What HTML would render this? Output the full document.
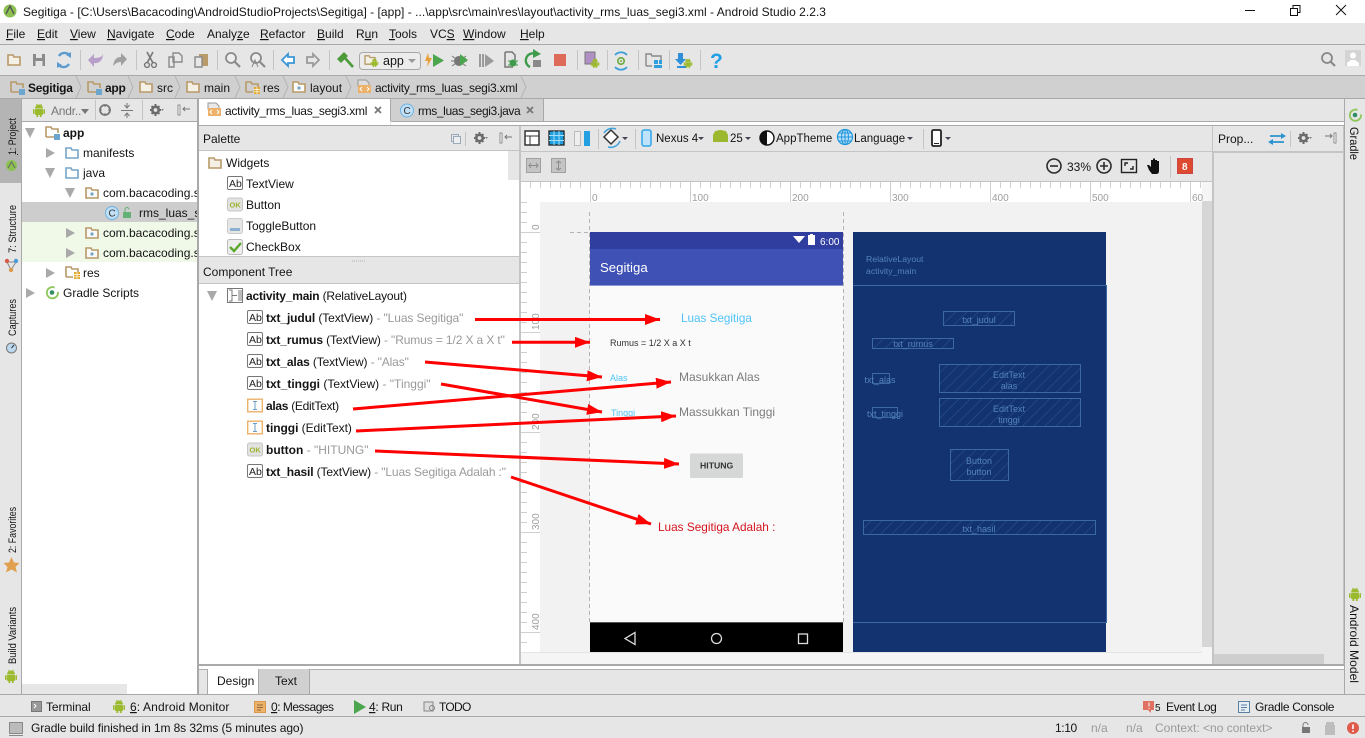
<!DOCTYPE html>
<html><head><meta charset="utf-8"><title>Android Studio</title>
<style>
html,body{margin:0;padding:0;width:1365px;height:738px;overflow:hidden;background:#e6e6e6}
svg{display:block;position:absolute;left:0;top:0}
text{font-family:"Liberation Sans",sans-serif;font-size:12px;fill:#141414;white-space:pre}
.b{font-weight:bold}
.g{fill:#9a9a9a}
.u{text-decoration:underline}
.vl{font-size:11px}
.r{font-size:10px;fill:#9d9d9d}
.bp{font-size:9px;fill:#5483bb}
.bl{fill:none;stroke:#3d69a3;stroke-width:1}
.s{stroke:#c4c4c4;stroke-width:1}
</style></head><body>
<svg width="1365" height="738" viewBox="0 0 1365 738" xmlns="http://www.w3.org/2000/svg">
<defs>
<pattern id="hx" width="10" height="682" patternUnits="userSpaceOnUse" x="520" y="182"><path d="M.5 0V6" stroke="#cfcfcf"/></pattern>
<pattern id="hy" width="20" height="10" patternUnits="userSpaceOnUse" x="520" y="202"><path d="M0 .5H7" stroke="#cfcfcf"/></pattern>
<pattern id="ha" width="8" height="8" patternUnits="userSpaceOnUse" patternTransform="rotate(45)"><path d="M0 0V8" stroke="#2e568f" stroke-width="1"/></pattern>
<marker id="ar" markerUnits="userSpaceOnUse" markerWidth="16" markerHeight="12" refX="15" refY="5.5" orient="auto"><path d="M0 0L15 5.5L0 11z" fill="#f00"/></marker>
<symbol id="fo" viewBox="0 0 14 12" overflow="visible"><path d="M1 11V1H6L7 3H13V11Z" fill="#f4f0e6" stroke="#b89968" stroke-width="1.6"/></symbol>
<symbol id="fb" viewBox="0 0 14 12" overflow="visible"><path d="M1 11V1H6L7 3H13V11Z" fill="#fff" stroke="#74a6c8" stroke-width="1.6"/></symbol>
<symbol id="fp" viewBox="0 0 14 12" overflow="visible"><path d="M1 11V1H6L7 3H13V11Z" fill="#fafafa" stroke="#b89968" stroke-width="1.6"/><circle cx="7" cy="7" r="1.6" fill="#74a6c8"/></symbol>
<symbol id="fm" viewBox="0 0 16 14" overflow="visible"><path d="M1 11V1H6L7 3H13V7M9 11H1" fill="none" stroke="#b89968" stroke-width="1.6"/><rect x="9" y="8" width="6" height="6" fill="#6ca6cf"/></symbol>
<symbol id="fr" viewBox="0 0 16 14" overflow="visible"><path d="M1 11V1H6L7 3H13V6M8 11H1" fill="none" stroke="#b89968" stroke-width="1.6"/><rect x="9" y="6" width="6" height="7" fill="#e0a92e"/><path d="M9 8.5H15M9 10.8H15M12 6V13" stroke="#fff" stroke-width=".7"/></symbol>
<symbol id="ab" viewBox="0 0 16 14" overflow="visible"><rect x=".5" y=".5" width="15" height="13" rx="1.5" fill="#fff" stroke="#777"/><text x="2" y="11" style="font-size:10.5px;fill:#222">Ab</text></symbol>
<symbol id="ok" viewBox="0 0 16 14" overflow="visible"><rect x=".5" y=".5" width="15" height="13" rx="2" fill="#e2e2e0" stroke="#c6c6c6"/><text x="2.5" y="10" style="font-size:7.5px;font-weight:bold;fill:#9cb42e">OK</text></symbol>
<symbol id="et" viewBox="0 0 16 14" overflow="visible"><rect x=".7" y=".7" width="14.6" height="12.6" fill="#fff" stroke="#eeb169" stroke-width="1.4"/><path d="M6 3H10M6 11H10M8 3V11" stroke="#6a9cc4" fill="none"/></symbol>
<symbol id="an" viewBox="0 0 14 14" overflow="visible"><path d="M3 5.5A4 4 0 0 1 11 5.5Z" fill="#9cba2e"/><rect x="3" y="6" width="8" height="6" rx="1" fill="#9cba2e"/><rect x="1" y="6" width="1.6" height="5" rx=".8" fill="#9cba2e"/><rect x="11.4" y="6" width="1.6" height="5" rx=".8" fill="#9cba2e"/><rect x="4.4" y="11" width="1.8" height="3" fill="#9cba2e"/><rect x="7.8" y="11" width="1.8" height="3" fill="#9cba2e"/><path d="M4.5 1L5.5 2.5M9.5 1L8.5 2.5" stroke="#9cba2e"/></symbol>
<symbol id="gr" viewBox="0 0 14 12" overflow="visible"><path d="M9.500 1A5.600 5.600 0 1 0 13 5.500" fill="none" stroke="#8dc65a" stroke-width="1.800"/><circle cx="7" cy="6" r="2.300" fill="#2f8f63"/></symbol>
<symbol id="gear" viewBox="0 0 14 12" overflow="visible"><circle cx="5.500" cy="6" r="3.200" fill="none" stroke="#6a6a6a" stroke-width="2.600"/><path d="M5.500 0V2M5.500 10V12M0 6H2M9 6H11M1.600 2.100L3 3.500M8 8.500L9.400 9.900M9.400 2.100L8 3.500M3 8.500L1.600 9.900" stroke="#6a6a6a" stroke-width="2"/><path d="M11 5H14L12.500 7z" fill="#888"/></symbol>
<symbol id="hl" viewBox="0 0 12 12" overflow="visible"><rect x="0" y="1" width="2" height="10" fill="#fff" stroke="#777" stroke-width=".8"/><path d="M5 5H12M7 3L5 5L7 7" stroke="#777" fill="none"/></symbol>
</defs>

<!-- base areas -->
<rect width="1365" height="23" fill="#fff"/>
<rect y="23" width="1365" height="21" fill="#e6e6e6"/>
<rect y="44" width="1365" height="1" fill="#a9a9a9"/>
<rect y="75" width="1365" height="1" fill="#a9a9a9"/>
<rect y="76" width="1365" height="22" fill="#d0d0d0"/>
<rect y="98" width="1365" height="1" fill="#a9a9a9"/>

<!-- left stripe -->
<rect x="0" y="99" width="21" height="84" fill="#b4b4b4"/>
<rect x="21" y="99" width="1" height="596" fill="#a9a9a9"/>
<!-- right stripe -->
<rect x="1344" y="99" width="1" height="596" fill="#a9a9a9"/>

<!-- project panel -->
<rect x="22" y="121" width="175" height="573" fill="#fff"/>
<rect x="22" y="121" width="175" height="1" fill="#a9a9a9"/>
<rect x="197" y="99" width="2" height="596" fill="#a9a9a9"/>
<rect x="22" y="202" width="175" height="20" fill="#cdcdcd"/>
<rect x="22" y="222" width="175" height="40" fill="#f0f8e8"/>
<rect x="22" y="684" width="105" height="10" fill="#e6e6e6"/>

<!-- editor tabs -->
<rect x="199" y="99" width="191" height="26" fill="#fff"/>
<rect x="390" y="99" width="1" height="22" fill="#a9a9a9"/>
<rect x="391" y="99" width="152" height="22" fill="#d0d0d0"/>
<rect x="543" y="99" width="1" height="22" fill="#a9a9a9"/>
<rect x="391" y="121" width="953" height="1" fill="#a9a9a9"/>
<rect x="391" y="122" width="953" height="3" fill="#fff"/>
<rect x="199" y="125" width="1145" height="1" fill="#a9a9a9"/>

<!-- palette -->
<rect x="199" y="126" width="320" height="24" fill="#e6e6e6"/>
<rect x="199" y="150" width="320" height="1" fill="#c4c4c4"/>
<rect x="199" y="151" width="320" height="105" fill="#fff"/>
<rect x="508" y="151" width="11" height="29" fill="#e6e6e6"/>
<rect x="199" y="256" width="320" height="1" fill="#c4c4c4"/>
<rect x="199" y="257" width="320" height="26" fill="#e6e6e6"/>
<rect x="199" y="283" width="320" height="1" fill="#c4c4c4"/>
<rect x="199" y="284" width="320" height="380" fill="#fff"/>
<path d="M352 261h14" stroke="#b0b0b0" stroke-dasharray="1 1"/>
<rect x="519" y="126" width="2" height="539" fill="#c4c4c4"/>

<!-- design area -->
<rect x="521" y="126" width="691" height="25" fill="#e6e6e6"/>
<rect x="521" y="151" width="691" height="1" fill="#c4c4c4"/>
<rect x="521" y="152" width="691" height="29" fill="#e6e6e6"/>
<rect x="521" y="181" width="691" height="1" fill="#c4c4c4"/>
<rect x="521" y="182" width="681" height="20" fill="#fff"/>
<rect x="521" y="182" width="681" height="20" fill="url(#hx)"/>
<rect x="521" y="202" width="19" height="450" fill="#fff"/>
<rect x="521" y="202" width="19" height="450" fill="url(#hy)"/>
<rect x="540" y="202" width="662" height="450" fill="#f2f2f2"/>
<rect x="521" y="652" width="681" height="12" fill="#f5f5f5"/>
<rect x="521" y="652" width="681" height="1" fill="#e4e4e4"/>
<rect x="1202" y="182" width="10" height="482" fill="#f5f5f5"/>
<rect x="1202" y="201" width="10" height="446" fill="#d6d6d6"/>
<path d="M590.5 182V202M690.5 182V202M790.5 182V202M890.5 182V202M990.5 182V202M1090.5 182V202M1190.5 182V202M521 232.5H540M521 332.5H540M521 432.5H540M521 532.5H540M521 632.5H540" stroke="#cfcfcf"/>
<text class="r" x="592" y="201">0</text><text class="r" x="692" y="201">100</text><text class="r" x="792" y="201">200</text><text class="r" x="892" y="201">300</text><text class="r" x="992" y="201">400</text><text class="r" x="1092" y="201">500</text><text class="r" x="1192" y="201">60</text>
<text class="r" transform="translate(539 230) rotate(-90)">0</text>
<text class="r" transform="translate(539 330) rotate(-90)">100</text>
<text class="r" transform="translate(539 430) rotate(-90)">200</text>
<text class="r" transform="translate(539 530) rotate(-90)">300</text>
<text class="r" transform="translate(539 630) rotate(-90)">400</text>

<!-- properties panel -->
<rect x="1212" y="126" width="1" height="539" fill="#c4c4c4"/>
<rect x="1213" y="151" width="131" height="2" fill="#c4c4c4"/>
<rect x="1213" y="153" width="1" height="512" fill="#c4c4c4"/>
<rect x="1343" y="126" width="1" height="539" fill="#c4c4c4"/>
<rect x="1214" y="654" width="110" height="10" fill="#cecece"/>
<rect x="1214" y="664" width="130" height="1" fill="#c4c4c4"/>

<!-- bottom of editor -->
<rect x="199" y="664" width="1145" height="2" fill="#a9a9a9"/>
<rect x="199" y="666" width="1145" height="3" fill="#fff"/>
<rect x="199" y="669" width="1145" height="1" fill="#b0b0b0"/>
<rect x="199" y="670" width="1145" height="24" fill="#e6e6e6"/>
<rect x="207" y="669" width="52" height="26" fill="#fff"/>
<rect x="207" y="669" width="1" height="26" fill="#a9a9a9"/>
<rect x="259" y="669" width="51" height="25" fill="#d0d0d0"/>
<path d="M258.5 669V695M309.5 669V694" stroke="#a9a9a9"/>
<rect y="694" width="1365" height="1" fill="#a9a9a9"/>
<rect y="716" width="1365" height="1" fill="#a9a9a9"/>

<!-- title bar -->
<circle cx="10" cy="11" r="6.5" fill="#8cc152"/><path d="M6 14L10 6L14 14" stroke="#555" fill="none" stroke-width="1.4"/>
<text x="23" y="16" style="letter-spacing:.026px">Segitiga - [C:\Users\Bacacoding\AndroidStudioProjects\Segitiga] - [app] - ...\app\src\main\res\layout\activity_rms_luas_segi3.xml - Android Studio 2.2.3</text>
<path d="M1245 10.5H1255" stroke="#111"/>
<path d="M1290.5 8.5h7v7h-7zM1293 8V5.5h7v7h-2.5" fill="none" stroke="#111"/>
<path d="M1336 5L1346 15M1346 5L1336 15" stroke="#111"/>

<!-- menu -->
<text x="6" y="38"><tspan class="u">F</tspan>ile</text>
<text x="37" y="38"><tspan class="u">E</tspan>dit</text>
<text x="70" y="38"><tspan class="u">V</tspan>iew</text>
<text x="107" y="38"><tspan class="u">N</tspan>avigate</text>
<text x="166" y="38"><tspan class="u">C</tspan>ode</text>
<text x="207" y="38">Analy<tspan class="u">z</tspan>e</text>
<text x="260" y="38"><tspan class="u">R</tspan>efactor</text>
<text x="317" y="38"><tspan class="u">B</tspan>uild</text>
<text x="356" y="38">R<tspan class="u">u</tspan>n</text>
<text x="389" y="38"><tspan class="u">T</tspan>ools</text>
<text x="430" y="38">VC<tspan class="u">S</tspan></text>
<text x="463" y="38"><tspan class="u">W</tspan>indow</text>
<text x="520" y="38"><tspan class="u">H</tspan>elp</text>

<!-- toolbar -->
<use href="#fo" x="7" y="54" width="14" height="12"/>
<path d="M33 54h12v12h-12z" fill="#8b8b8b"/><rect x="36" y="54" width="6" height="4" fill="#e6e6e6"/><rect x="35.5" y="61" width="7" height="5" fill="#e6e6e6"/>
<path d="M70 56A6.5 6.5 0 0 0 59 56M58 64A6.5 6.5 0 0 0 69 64" fill="none" stroke="#5b9bd0" stroke-width="2.4"/><path d="M66 55l5 -3v6zM62 65l-5 3v-6z" fill="#5b9bd0"/>
<path d="M80.5 50V70M136.5 50V70M217.5 50V70M273.5 50V70M329.5 50V70M577.5 50V70M607.5 50V70M638.5 50V70M669.5 50V70M700.5 50V70" class="s"/>
<path d="M88 60L94 54V58C99 58 102 57 103 54C103 60 99 64 94 63V67Z" fill="#b89fc9"/>
<path d="M127 59L121 53V57C116 57 114 60 113 66C116 63 118 62 121 62V66Z" fill="#a0a0a0"/>
<path d="M147 52L153 63M153 52L147 63" stroke="#777" stroke-width="1.6"/><circle cx="147" cy="65" r="2.4" fill="none" stroke="#777" stroke-width="1.4"/><circle cx="154" cy="65" r="2.4" fill="none" stroke="#777" stroke-width="1.4"/>
<path d="M173 53h6l3 3v6h-9zM169 57h5v10h-5z" fill="#e8e8e8" stroke="#8a8a8a" stroke-width="1.4"/>
<path d="M199 54h9v12h-9z" fill="#b89968"/><path d="M195 57h7v10h-7z" fill="#e8e8e8" stroke="#8a8a8a" stroke-width="1.4"/>
<circle cx="231" cy="58" r="5" fill="#eee" stroke="#8a8a8a" stroke-width="1.8"/><path d="M235 62L240 67" stroke="#8a8a8a" stroke-width="2.2"/>
<circle cx="256" cy="58" r="5" fill="#eee" stroke="#8a8a8a" stroke-width="1.8"/><path d="M260 62L265 67" stroke="#8a8a8a" stroke-width="2.2"/><path d="M252 67L255 60L258 67" stroke="#8a8a8a" fill="none"/>
<path d="M282 60L288 54V57H294V63H288V66Z" fill="#fff" stroke="#3a97d6" stroke-width="1.8"/>
<path d="M319 60L313 54V57H307V63H313V66Z" fill="#e6e6e6" stroke="#9a9a9a" stroke-width="1.8"/>
<path d="M337 59L344 52L348 56L341 63Z" fill="#4d9a3a"/><path d="M345 58L353 67" stroke="#4d9a3a" stroke-width="2.6"/>
<rect x="359.5" y="52.5" width="61" height="17" rx="3" fill="#ececec" stroke="#a8a8a8"/>
<use href="#fo" x="364" y="55" width="12" height="10"/><use href="#an" x="370" y="58" width="9" height="9"/>
<text x="383" y="65" style="font-size:12.5px">app</text><path d="M408 59H416L412 63z" fill="#999"/>
<path d="M428 53L425 61H428L427 67L432 58H429Z" fill="#e8a13a"/><path d="M433 54L444 60.5L433 67Z" fill="#4ba54d"/>
<circle cx="459" cy="61" r="5" fill="#777"/><path d="M452 56L466 66M452 66L466 56M451 61H467" stroke="#777"/><path d="M460 54l8 6-8 6z" fill="#4ba54d"/>
<rect x="479" y="54" width="2" height="13" fill="#9a9a9a"/><rect x="482" y="54" width="2" height="13" fill="#9a9a9a"/><path d="M485 54L494 61L485 67Z" fill="#9a9a9a"/>
<path d="M505 52h7l3 3v5M513 67h-8V52" fill="none" stroke="#777" stroke-width="1.5"/><circle cx="513" cy="63" r="3.5" fill="#3f9b4b"/><path d="M508 61H518M508 65H518" stroke="#3f9b4b"/>
<path d="M536 54A7 7 0 1 0 530 67" fill="none" stroke="#3f9b4b" stroke-width="2.4"/><path d="M533 49L541 54L533 58Z" fill="#3f9b4b"/><rect x="533" y="60" width="8" height="7" fill="#8a8a8a"/>
<rect x="554" y="54" width="12" height="12" fill="#de6a5a"/>
<path d="M585 52h10v12h-10z" fill="#b08fc4" stroke="#777"/><rect x="588" y="54" width="6" height="9" fill="#b08fc4"/><use href="#an" x="590" y="58" width="10" height="10"/>
<circle cx="621" cy="61" r="3.2" fill="none" stroke="#6aa93c" stroke-width="1.6"/><circle cx="621" cy="61" r="1" fill="#6aa93c"/><path d="M615 55A8 8 0 0 1 627 55M615 67A8 8 0 0 0 627 67" stroke="#3f9fd8" stroke-width="1.8" fill="none"/>
<path d="M646 66V54h5l1 2h9v4" fill="none" stroke="#888" stroke-width="1.4"/><rect x="654" y="60" width="4" height="4" fill="#2f9fe0"/><rect x="659" y="60" width="3" height="4" fill="#2f9fe0"/><rect x="654" y="65" width="8" height="3" fill="#2f9fe0"/><path d="M646 66h6" stroke="#888" stroke-width="1.4"/>
<path d="M678 53h5v6h3l-5.500 6-5.500-6h3z" fill="#2f8fd8"/><rect x="677" y="66" width="9" height="2" fill="#2f8fd8"/><use href="#an" x="683" y="58" width="10" height="10"/>
<text x="710" y="68" style="font-size:21px;font-weight:bold;fill:#1ea0e6">?</text>
<circle cx="1327" cy="58" r="5" fill="none" stroke="#888" stroke-width="1.8"/><path d="M1331 62L1335 66" stroke="#888" stroke-width="2.2"/>
<rect x="1345" y="50" width="16" height="16" fill="#d4d4d4"/><circle cx="1353" cy="55.500" r="3" fill="#fff"/><path d="M1347 66V63L1351 60H1355L1359 63V66Z" fill="#fff"/>

<!-- nav bar -->
<use href="#fm" x="10" y="81" width="16" height="14"/><text class="b" x="28" y="92" style="letter-spacing:-.25px">Segitiga</text>
<path d="M76 76L81 87L76 98" fill="none" stroke="#b4b4b4"/>
<use href="#fm" x="87" y="81" width="16" height="14"/><text class="b" x="105" y="92" style="letter-spacing:-.25px">app</text>
<path d="M128 76L133 87L128 98" fill="none" stroke="#b4b4b4"/>
<use href="#fo" x="139" y="81" width="14" height="12"/><text x="157" y="92">src</text>
<path d="M175 76L180 87L175 98" fill="none" stroke="#b4b4b4"/>
<use href="#fo" x="186" y="81" width="14" height="12"/><text x="204" y="92">main</text>
<path d="M235 76L240 87L235 98" fill="none" stroke="#b4b4b4"/>
<use href="#fr" x="245" y="81" width="16" height="14"/><text x="263" y="92">res</text>
<path d="M283 76L288 87L283 98" fill="none" stroke="#b4b4b4"/>
<use href="#fp" x="292" y="81" width="14" height="12"/><text x="310" y="92">layout</text>
<path d="M346 76L351 87L346 98" fill="none" stroke="#b4b4b4"/>
<path d="M358 80h8l3 3v3h-11z" fill="#ddd" stroke="#999"/><rect x="358" y="85" width="13" height="8" fill="#eeb169"/><path d="M362 87L360 89L362 91M367 87L369 89L367 91" stroke="#fff" fill="none"/>
<text x="375" y="92" style="letter-spacing:-.26px">activity_rms_luas_segi3.xml</text>
<path d="M521 76L526 87L521 98" fill="none" stroke="#b4b4b4"/>

<!-- project tool header -->
<use href="#an" x="32" y="103" width="14" height="14"/>
<text x="51" y="115" style="fill:#777;letter-spacing:-.2px">Andr..</text><path d="M81 109H89L85 114z" fill="#777"/>
<path d="M95.500 100V120M142.500 100V120" class="s"/>
<circle cx="105" cy="110" r="5" fill="none" stroke="#777" stroke-width="1.800"/><path d="M105 105V115M100 110H110" stroke="#777" stroke-dasharray="2 6"/>
<path d="M121 110.500H133M127 103V107M124.500 105L127 108L129.500 105M127 118V114M124.500 116L127 113L129.500 116" stroke="#777" fill="none"/>
<use href="#gear" x="150" y="104" width="14" height="12"/>
<use href="#hl" x="178" y="104" width="12" height="12"/>

<!-- tabs -->
<path d="M208 103h8l3 3v3h-11z" fill="#e8e8e8" stroke="#999"/><rect x="208" y="108" width="13" height="8" fill="#eeb169"/><path d="M212 110L210 112L212 114M217 110L219 112L217 114" stroke="#fff" fill="none"/>
<text x="225" y="115" style="letter-spacing:-.27px">activity_rms_luas_segi3.xml</text>
<path d="M375 107L381 113M381 107L375 113" stroke="#777" stroke-width="1.800"/>
<circle cx="407" cy="110.500" r="6.500" fill="#bfe0f7" stroke="#6fb2e0"/><text x="403.500" y="114" style="font-size:10px;fill:#333">C</text>
<text x="418" y="115" style="letter-spacing:-.37px">rms_luas_segi3.java</text>
<path d="M527 107L533 113M533 107L527 113" stroke="#777" stroke-width="1.800"/>

<!-- vertical labels -->
<text class="vl" transform="translate(16 155) rotate(-90)" textLength="37" lengthAdjust="spacingAndGlyphs">1: Project</text>
<path d="M17.500 155V154" stroke="#222"/>
<circle cx="11.500" cy="165.500" r="5.500" fill="#8cc152"/><path d="M8 168L11.500 162L15 168" stroke="#666" fill="none"/>
<text class="vl" transform="translate(16 253) rotate(-90)" textLength="48" lengthAdjust="spacingAndGlyphs">7: Structure</text>
<path d="M7 262L11 270M16 262L11 270M7 262H16" stroke="#888" fill="none"/><circle cx="7" cy="261" r="2.200" fill="#d85a4a"/><circle cx="16" cy="261" r="2.200" fill="#4a9ad8"/><circle cx="11" cy="270" r="2.200" fill="#d89a4a"/>
<text class="vl" transform="translate(16 336) rotate(-90)" textLength="37" lengthAdjust="spacingAndGlyphs">Captures</text>
<circle cx="11.500" cy="348" r="5" fill="#bcd8ef" stroke="#777"/><path d="M11.500 348L14 345" stroke="#333"/>
<text class="vl" transform="translate(16 553) rotate(-90)" textLength="46" lengthAdjust="spacingAndGlyphs">2: Favorites</text>
<path d="M11.500 557L14 562.500L19.500 563L15.500 567L17 572.500L11.500 569.500L6 572.500L7.500 567L3.500 563L9 562.500Z" fill="#e0a050"/>
<text class="vl" transform="translate(16 664) rotate(-90)" textLength="57" lengthAdjust="spacingAndGlyphs">Build Variants</text>
<use href="#an" x="4" y="669" width="14" height="14"/>
<use href="#gr" x="1348" y="109" width="14" height="12"/>
<text class="vl" transform="translate(1350 127) rotate(90)" style="font-size:12px" textLength="33" lengthAdjust="spacingAndGlyphs">Gradle</text>
<use href="#an" x="1348" y="587" width="14" height="14"/>
<text class="vl" transform="translate(1350 605) rotate(90)" style="font-size:12px" textLength="78" lengthAdjust="spacingAndGlyphs">Android Model</text>

<!-- project tree -->
<g fill="#a9a9a9">
<path d="M25 128H35L30 138z"/><path d="M46 148V158L55 153z"/><path d="M45 168H55L50 178z"/><path d="M65 188H75L70 198z"/><path d="M66 228V238L75 233z"/><path d="M66 248V258L75 253z"/><path d="M46 268V278L55 273z"/><path d="M26 288V298L35 293z"/>
</g>
<use href="#fm" x="45" y="126" width="16" height="14"/><text class="b" x="63" y="137">app</text>
<use href="#fb" x="65" y="147" width="14" height="12"/><text x="83" y="157">manifests</text>
<use href="#fb" x="65" y="167" width="14" height="12"/><text x="83" y="177">java</text>
<svg x="22" y="122" width="175" height="200">
<use href="#fp" x="63" y="65" width="14" height="12"/><text x="81" y="75">com.bacacoding.segitiga</text>
<circle cx="90" cy="91" r="6.500" fill="#bfe0f7" stroke="#6fb2e0"/><text x="86.500" y="94.500" style="font-size:10px;fill:#333">C</text>
<rect x="101" y="90" width="8" height="6" fill="#63b174"/><path d="M103 90V87.500A2 2 0 0 1 107 87.500" stroke="#63b174" fill="none"/>
<text x="117" y="95">rms_luas_segi3</text>
<use href="#fp" x="63" y="105" width="14" height="12"/><text x="81" y="115">com.bacacoding.segitiga</text>
<use href="#fp" x="63" y="125" width="14" height="12"/><text x="81" y="135">com.bacacoding.segitiga</text>
</svg>
<use href="#fr" x="65" y="266" width="16" height="14"/><text x="83" y="277">res</text>
<use href="#gr" x="45" y="286" width="14" height="13"/><text x="63" y="297">Gradle Scripts</text>

<!-- palette text -->
<text x="203" y="143">Palette</text>
<rect x="451.500" y="134.500" width="7" height="7" fill="none" stroke="#9ab"/><rect x="453.500" y="136.500" width="7" height="7" fill="#eee" stroke="#9ab"/>
<path d="M465.500 132V146" class="s"/>
<use href="#gear" x="474" y="132" width="14" height="12"/>
<use href="#hl" x="500" y="132" width="12" height="12"/>
<use href="#fo" x="208" y="157" width="14" height="12"/><text x="226" y="167">Widgets</text>
<use href="#ab" x="227" y="176" width="16" height="14"/><text x="246" y="188">TextView</text>
<use href="#ok" x="227" y="197" width="16" height="15"/><text x="246" y="209">Button</text>
<rect x="227.500" y="218.500" width="15" height="15" rx="2" fill="#e6e6e6" stroke="#ccc"/><rect x="230" y="228" width="10" height="3" fill="#8bb0d0"/><text x="246" y="230">ToggleButton</text>
<rect x="227.500" y="239.500" width="15" height="15" rx="2" fill="#eee" stroke="#bbb"/><path d="M230 247L234 251L241 243" stroke="#5aa82c" stroke-width="2.400" fill="none"/><text x="246" y="251">CheckBox</text>
<text x="203" y="276">Component Tree</text>

<!-- component tree -->
<path d="M207 291H217L212 301z" fill="#a9a9a9"/>
<rect x="227.500" y="288.500" width="15" height="14" fill="#fff" stroke="#777"/><rect x="238" y="290" width="4" height="11" fill="#bbb"/><path d="M229 290H232V301H229M232 295.500H237" stroke="#777" fill="none"/>
<text x="246" y="300" style="letter-spacing:-.2px"><tspan class="b">activity_main</tspan> (RelativeLayout)</text>
<use href="#ab" x="247" y="310" width="16" height="14"/><text x="266" y="322" style="letter-spacing:-.1px"><tspan class="b">txt_judul</tspan> (TextView) <tspan class="g">- "Luas Segitiga"</tspan></text>
<use href="#ab" x="247" y="332" width="16" height="14"/><text x="266" y="344" style="letter-spacing:-.12px"><tspan class="b">txt_rumus</tspan> (TextView) <tspan class="g">- "Rumus = 1/2 X a X t"</tspan></text>
<use href="#ab" x="247" y="354" width="16" height="14"/><text x="266" y="366" style="letter-spacing:-.13px"><tspan class="b">txt_alas</tspan> (TextView) <tspan class="g">- "Alas"</tspan></text>
<use href="#ab" x="247" y="376" width="16" height="14"/><text x="266" y="388"><tspan class="b">txt_tinggi</tspan> (TextView) <tspan class="g">- "Tinggi"</tspan></text>
<use href="#et" x="247" y="398" width="16" height="15"/><text x="266" y="410" style="letter-spacing:-.3px"><tspan class="b">alas</tspan> (EditText)</text>
<use href="#et" x="247" y="420" width="16" height="15"/><text x="266" y="432" style="letter-spacing:-.05px"><tspan class="b">tinggi</tspan> (EditText)</text>
<use href="#ok" x="247" y="442" width="16" height="15"/><text x="266" y="454"><tspan class="b">button</tspan> <tspan class="g">- "HITUNG"</tspan></text>
<use href="#ab" x="247" y="464" width="16" height="14"/><text x="266" y="476" style="letter-spacing:-.14px"><tspan class="b">txt_hasil</tspan> (TextView) <tspan class="g">- "Luas Segitiga Adalah :"</tspan></text>

<!-- design toolbar -->
<rect x="525" y="131" width="14" height="14" fill="#fff" stroke="#333" stroke-width="1.500"/><path d="M525 136H539M530 136V145" stroke="#333"/>
<rect x="549" y="131" width="15" height="14" fill="#1fa0e0" stroke="#222" stroke-width="1.300"/><path d="M554 131V145M559 131V145M549 135.500H564M549 140.500H564" stroke="#a8dcf8"/>
<rect x="574.500" y="131.500" width="6" height="14" fill="#eee" stroke="#bbb"/><rect x="584" y="131" width="6" height="15" fill="#22a0e2"/>
<path d="M598.500 129V149M635.500 129V149M923.500 129V149M1170.500 156V178" class="s"/>
<path d="M604 137L611 130L618 137L611 144Z" fill="#fff" stroke="#333" stroke-width="1.500"/>
<path d="M604 133A10 10 0 0 1 616 129M620 141A10 10 0 0 1 608 147" fill="none" stroke="#3da3de" stroke-width="1.500"/>
<path d="M622 137H628L625 140z" fill="#445"/>
<rect x="642" y="130" width="9" height="16" rx="2" fill="#bfe3fa" stroke="#2fa5ea" stroke-width="1.500"/>
<text x="656" y="142" style="font-size:11.500px">Nexus 4</text><path d="M698 137H704L701 140z" fill="#445"/>
<path d="M713 136A7.500 6 0 0 1 728 136V142H713Z" fill="#9cb82e"/><path d="M715 131L717 133M726 131L724 133" stroke="#9cb82e"/>
<text x="730" y="142" style="font-size:11.500px">25</text><path d="M745 137H751L748 140z" fill="#445"/>
<circle cx="767" cy="138" r="7" fill="#fff" stroke="#111" stroke-width="1.400"/><path d="M767 131A7 7 0 0 1 767 145Z" fill="#111" transform="rotate(180 767 138)"/>
<text x="776" y="142" style="font-size:11.500px">AppTheme</text>
<circle cx="845" cy="137" r="7.500" fill="#b9e0f7" stroke="#1e96dc" stroke-width="1.200"/><path d="M845 129.500V144.500M837.500 137H852.500M839 133H851M839 141H851" stroke="#1e96dc"/><ellipse cx="845" cy="137" rx="3.500" ry="7.500" fill="none" stroke="#1e96dc"/>
<text x="854" y="142" style="font-size:11.500px">Language</text><path d="M907 137H913L910 140z" fill="#445"/>
<rect x="932" y="130" width="9" height="16" rx="1.500" fill="#fff" stroke="#222" stroke-width="1.800"/><path d="M934 143.500H939" stroke="#222"/><path d="M945 137H951L948 140z" fill="#445"/>
<rect x="526.500" y="158.500" width="14" height="14" fill="#c4c4c4" stroke="#a0a0a0"/><path d="M529 165.500H538" stroke="#8a8a8a"/><path d="M531 163L529 165.500L531 168M536 163L538 165.500L536 168" fill="none" stroke="#8a8a8a"/>
<rect x="551.500" y="158.500" width="14" height="14" fill="#c4c4c4" stroke="#a0a0a0"/><path d="M558.500 161V170M556 163L558.500 161L561 163M556 168L558.500 170L561 168" fill="none" stroke="#8a8a8a"/>
<circle cx="1054" cy="166" r="7" fill="none" stroke="#2c2c2c" stroke-width="1.600"/><path d="M1050 166H1058" stroke="#2c2c2c" stroke-width="1.600"/>
<text x="1067" y="171">33%</text>
<circle cx="1104" cy="166" r="7" fill="none" stroke="#2c2c2c" stroke-width="1.600"/><path d="M1100 166H1108M1104 162V170" stroke="#2c2c2c" stroke-width="1.600"/>
<rect x="1121.500" y="159.500" width="15" height="13" fill="none" stroke="#222" stroke-width="1.400"/><path d="M1125 166V163H1128M1133 166V169H1130" fill="none" stroke="#222" stroke-width="1.400"/>
<path d="M1149 170L1147 165L1149 165L1151 167V160H1153V158.500H1155V160H1157V161H1159V171Q1159 174 1156 174H1152Z" fill="#111"/>
<rect x="1177.500" y="158.500" width="15" height="15" fill="#dd4a2f" stroke="#c44"/><text x="1182" y="170" style="font-size:10px;font-weight:bold;fill:#fff">8</text>

<!-- properties header -->
<text x="1218" y="143">Prop...</text>
<path d="M1270 136H1282M1284 142H1272" stroke="#2b93cf" stroke-width="1.800" fill="none"/><path d="M1286 136L1281 133V139ZM1268 142L1273 139V145Z" fill="#2b93cf"/>
<path d="M1290.500 131V147" class="s"/>
<use href="#gear" x="1298" y="132" width="14" height="12"/>
<path d="M1325 136H1332M1330 134L1332 136L1330 138" stroke="#777" fill="none"/><rect x="1334" y="133" width="2" height="10" fill="#fff" stroke="#777" stroke-width=".8"/>

<!-- phone -->
<rect x="590" y="232" width="253" height="17" fill="#303f9f"/>
<rect x="590" y="249" width="253" height="36" fill="#3f51b5"/>
<rect x="590" y="285" width="253" height="1" fill="#8d97d3"/>
<rect x="590" y="286" width="253" height="336" fill="#fafafa"/>
<rect x="590" y="622" width="253" height="30" fill="#000"/>
<rect x="590" y="622" width="253" height="1" fill="#555"/>
<path d="M793 236H805L799 243Z" fill="#fff"/><rect x="808" y="235" width="7" height="10" fill="#fff"/><rect x="810" y="234" width="3" height="1" fill="#fff"/>
<text x="820" y="245" style="font-size:10px;fill:#fff">6:00</text>
<text x="600" y="272" style="font-size:13.200px;fill:#fff;">Segitiga</text>
<path d="M589.500 212V622M843.500 212V622M570 232.500H590" stroke="#b4b4b4" stroke-dasharray="4 3" fill="none"/>
<text x="681" y="322" style="font-size:11.700px;fill:#4fc3f7">Luas Segitiga</text>
<text x="610" y="346" style="font-size:9px;fill:#333">Rumus = 1/2 X a X t</text>
<text x="610" y="381" style="font-size:9px;fill:#4fc3f7">Alas</text>
<text x="611" y="416" style="font-size:9px;fill:#4fc3f7">Tinggi</text>
<text x="679" y="381" style="font-size:12px;fill:#7c7c7c">Masukkan Alas</text>
<text x="679" y="416" style="font-size:12px;fill:#7c7c7c">Massukkan Tinggi</text>
<rect x="690" y="453.500" width="53" height="24.500" rx="1" fill="#d6d7d7"/>
<text x="700" y="468.500" style="font-size:8.700px;font-weight:bold;fill:#333">HITUNG</text>
<text x="658" y="531" style="font-size:11.800px;fill:#d5141e">Luas Segitiga Adalah :</text>
<path d="M635 632.500V644.500L625 638.500Z" fill="none" stroke="#ddd" stroke-width="1.300"/>
<circle cx="716.500" cy="638.500" r="5" fill="none" stroke="#ddd" stroke-width="1.300"/>
<rect x="798.500" y="634" width="9" height="9.500" fill="none" stroke="#ddd" stroke-width="1.300"/>

<!-- blueprint -->
<rect x="853" y="232" width="253" height="420" fill="#12336f"/>
<path d="M853 285.500H1106.500V622.500H853" fill="none" stroke="#3d69a3"/>
<g>
<rect x="943.500" y="311.500" width="71" height="14" fill="url(#ha)"/><rect class="bl" x="943.500" y="311.500" width="71" height="14"/>
<rect x="872.500" y="338.500" width="81" height="10" fill="url(#ha)"/><rect class="bl" x="872.500" y="338.500" width="81" height="10"/>
<rect class="bl" x="872.500" y="373.500" width="17" height="10"/>
<rect x="939.500" y="364.500" width="141" height="28" fill="url(#ha)"/><rect class="bl" x="939.500" y="364.500" width="141" height="28"/>
<rect x="939.500" y="398.500" width="141" height="28" fill="url(#ha)"/><rect class="bl" x="939.500" y="398.500" width="141" height="28"/>
<rect class="bl" x="872.500" y="407.500" width="25" height="10"/>
<rect x="950.500" y="449.500" width="58" height="31" fill="url(#ha)"/><rect class="bl" x="950.500" y="449.500" width="58" height="31"/>
<rect x="863.500" y="520.500" width="232" height="14" fill="url(#ha)"/><rect class="bl" x="863.500" y="520.500" width="232" height="14"/>
</g>
<g text-anchor="middle">
<text class="bp" x="979" y="323">txt_judul</text>
<text class="bp" x="913" y="347">txt_rumus</text>
<text class="bp" x="880" y="383">txt_alas</text>
<text class="bp" x="1009" y="378">EditText</text><text class="bp" x="1009" y="389">alas</text>
<text class="bp" x="885" y="417">txt_tinggi</text>
<text class="bp" x="1009" y="412">EditText</text><text class="bp" x="1009" y="423">tinggi</text>
<text class="bp" x="979" y="464">Button</text><text class="bp" x="979" y="475">button</text>
<text class="bp" x="979" y="532">txt_hasil</text>
</g>
<text class="bp" x="866" y="262" style="font-size:8.700px">RelativeLayout</text>
<text class="bp" x="866" y="274" style="font-size:8.700px">activity_main</text>

<!-- red arrows -->
<g stroke="#f00" stroke-width="3" fill="none">
<path d="M475 319.500L660 319.500" marker-end="url(#ar)"/>
<path d="M512 342.300L590 342.300" marker-end="url(#ar)"/>
<path d="M425 362L602 377" marker-end="url(#ar)"/>
<path d="M441 384L602 412" marker-end="url(#ar)"/>
<path d="M353 409L671 382" marker-end="url(#ar)"/>
<path d="M356 431L676 416" marker-end="url(#ar)"/>
<path d="M375 451L679 464" marker-end="url(#ar)"/>
<path d="M511 477L651 524" marker-end="url(#ar)"/>
</g>

<!-- design/text tabs -->
<text x="217" y="685">Design</text>
<text x="275" y="685">Text</text>

<!-- bottom tool bar -->
<rect x="31.500" y="701.500" width="10" height="10" fill="#999" stroke="#777"/><path d="M34 704L36 706L34 708" stroke="#fff" fill="none"/>
<text x="46" y="711" style="letter-spacing:-.1px">Terminal</text>
<use href="#an" x="112" y="699" width="14" height="14"/>
<text x="130" y="711" style="letter-spacing:.12px"><tspan class="u">6</tspan>: Android Monitor</text>
<rect x="254.500" y="701.500" width="11" height="11" fill="#eeb169" stroke="#d89a4a"/><path d="M257 705H263M257 707.500H263M257 710H261" stroke="#8a6a3a"/>
<text x="271" y="711" style="letter-spacing:-.5px"><tspan class="u">0</tspan>: Messages</text>
<path d="M354 700L366 707L354 714Z" fill="#4ba54d"/>
<text x="369" y="711" style="letter-spacing:-.3px"><tspan class="u">4</tspan>: Run</text>
<rect x="424" y="702" width="9" height="9" fill="#ddd" stroke="#888"/><circle cx="432" cy="708" r="2.500" fill="none" stroke="#888"/>
<text x="439" y="711" style="letter-spacing:-.7px">TODO</text>
<path d="M1143 701h11v9h-3v3l-3-3h-5z" fill="#e07060"/><path d="M1149 702.500V706.500M1149 708V709" stroke="#fff"/>
<text x="1155" y="711" style="font-size:10px">5</text>
<text x="1166" y="711" style="letter-spacing:-.4px">Event Log</text>
<rect x="1238.500" y="701.500" width="11" height="11" fill="#e6eef5" stroke="#5a7f9f"/><path d="M1241 705H1247M1241 707.500H1247M1241 710H1245" stroke="#5a7f9f"/>
<text x="1255" y="711" style="letter-spacing:-.3px">Gradle Console</text>

<!-- status bar -->
<rect x="9.500" y="722.500" width="13" height="11" fill="#bbb" stroke="#888"/><path d="M9 735.500H23" stroke="#888"/>
<text x="31" y="732" style="letter-spacing:-.1px">Gradle build finished in 1m 8s 32ms (5 minutes ago)</text>
<text x="1055" y="732" style="letter-spacing:-.4px">1:10</text>
<text class="g" x="1091" y="732">n/a</text>
<text class="g" x="1126" y="732">n/a</text>
<text class="g" x="1155" y="732">Context: &lt;no context&gt;</text>
<rect x="1302" y="727" width="8" height="6" fill="#777"/><path d="M1303 727V725A2.500 2.500 0 0 1 1308 725" stroke="#777" fill="none"/>
<path d="M1325 725H1335V735H1325ZM1326 722H1334V725H1326Z" fill="#bdbdbd"/>
<circle cx="1353" cy="728" r="6" fill="#e05a4a"/><path d="M1353 724.500V729M1353 730.500V732" stroke="#fff" stroke-width="1.600"/>
</svg>
</body></html>
